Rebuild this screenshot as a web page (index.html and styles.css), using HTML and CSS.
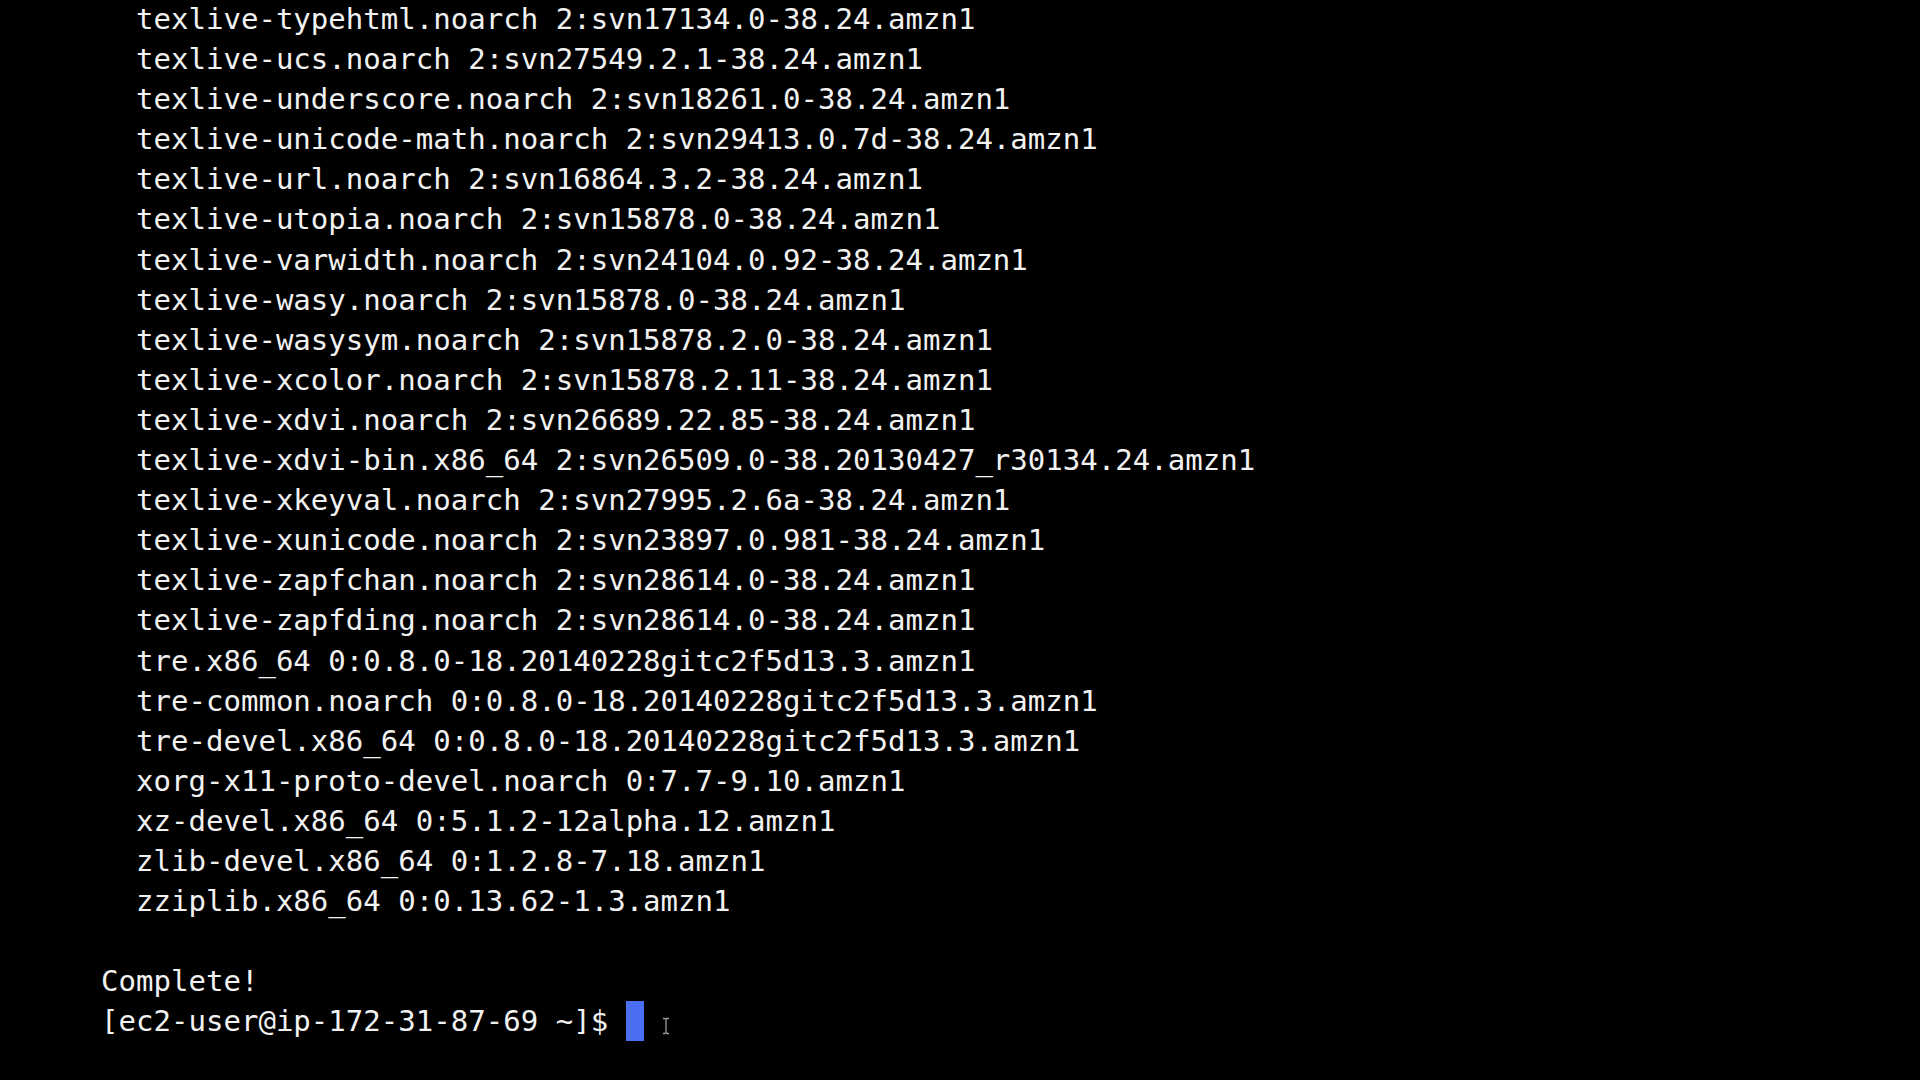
FILE: index.html
```html
<!DOCTYPE html>
<html>
<head>
<meta charset="utf-8">
<link rel="stylesheet" href="styles.css">
</head>
<body>
<div class="term">
<div class="line">  texlive-typehtml.noarch 2:svn17134.0-38.24.amzn1</div>
<div class="line">  texlive-ucs.noarch 2:svn27549.2.1-38.24.amzn1</div>
<div class="line">  texlive-underscore.noarch 2:svn18261.0-38.24.amzn1</div>
<div class="line">  texlive-unicode-math.noarch 2:svn29413.0.7d-38.24.amzn1</div>
<div class="line">  texlive-url.noarch 2:svn16864.3.2-38.24.amzn1</div>
<div class="line">  texlive-utopia.noarch 2:svn15878.0-38.24.amzn1</div>
<div class="line">  texlive-varwidth.noarch 2:svn24104.0.92-38.24.amzn1</div>
<div class="line">  texlive-wasy.noarch 2:svn15878.0-38.24.amzn1</div>
<div class="line">  texlive-wasysym.noarch 2:svn15878.2.0-38.24.amzn1</div>
<div class="line">  texlive-xcolor.noarch 2:svn15878.2.11-38.24.amzn1</div>
<div class="line">  texlive-xdvi.noarch 2:svn26689.22.85-38.24.amzn1</div>
<div class="line">  texlive-xdvi-bin.x86_64 2:svn26509.0-38.20130427_r30134.24.amzn1</div>
<div class="line">  texlive-xkeyval.noarch 2:svn27995.2.6a-38.24.amzn1</div>
<div class="line">  texlive-xunicode.noarch 2:svn23897.0.981-38.24.amzn1</div>
<div class="line">  texlive-zapfchan.noarch 2:svn28614.0-38.24.amzn1</div>
<div class="line">  texlive-zapfding.noarch 2:svn28614.0-38.24.amzn1</div>
<div class="line">  tre.x86_64 0:0.8.0-18.20140228gitc2f5d13.3.amzn1</div>
<div class="line">  tre-common.noarch 0:0.8.0-18.20140228gitc2f5d13.3.amzn1</div>
<div class="line">  tre-devel.x86_64 0:0.8.0-18.20140228gitc2f5d13.3.amzn1</div>
<div class="line">  xorg-x11-proto-devel.noarch 0:7.7-9.10.amzn1</div>
<div class="line">  xz-devel.x86_64 0:5.1.2-12alpha.12.amzn1</div>
<div class="line">  zlib-devel.x86_64 0:1.2.8-7.18.amzn1</div>
<div class="line">  zziplib.x86_64 0:0.13.62-1.3.amzn1</div>
<div class="line"> </div>
<div class="line">Complete!</div>
<div class="line prompt">[ec2-user@ip-172-31-87-69 ~]$ <span class="cursor"> </span><svg class="ibeam" width="10" height="18" viewBox="0 0 10 18"><path d="M2 1.5h2l1 1 1-1h2M5 2.5v13M2 16.5h2l1-1 1 1h2" fill="none" stroke="#9a9a9a" stroke-width="1.3"/></svg></div>
</div>
</body>
</html>
```
FILE: styles.css
```css
html, body {
  margin: 0;
  padding: 0;
  background: #000;
  width: 1920px;
  height: 1080px;
  overflow: hidden;
}
.term {
  margin-top: -1px;
  padding-left: 101px;
  font-family: "DejaVu Sans Mono", "Liberation Mono", monospace;
  font-size: 29.05px;
  line-height: 40.1px;
  color: #f2f2f2;
}
.line {
  white-space: pre;
  height: 40.1px;
}
.prompt {
  display: flex;
  align-items: center;
}
.cursor {
  display: inline-block;
  width: 18px;
  height: 40px;
  background: #4b6ef2;
}
.ibeam {
  margin-left: 17px;
  margin-top: 10px;
}
```
